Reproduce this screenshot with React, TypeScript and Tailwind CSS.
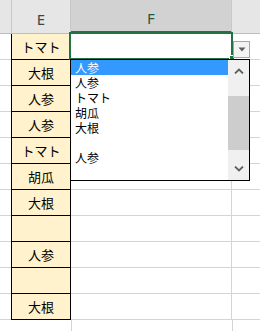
import React from 'react'

const cells = ['トマト', '大根', '人参', '人参', 'トマト', '胡瓜', '大根', '', '人参', '', '大根']
const options = ['人参', '人参', 'トマト', '胡瓜', '大根', '', '人参', '']

const jp = { fontFamily: '"Noto Sans CJK JP", "Noto Sans", sans-serif' }

function Chevron({ up }: { up?: boolean }) {
  return (
    <svg width="10" height="6" viewBox="0 0 10 6">
      <polyline
        points={up ? '1,5.5 5,1.5 9,5.5' : '1,0.5 5,4.5 9,0.5'}
        fill="none"
        stroke="#606060"
        strokeWidth="1.8"
      />
    </svg>
  )
}

export default function App() {
  return (
    <div className="relative w-[260px] h-[331px] overflow-hidden bg-white" style={jp}>
      {/* column headers */}
      <div
        className="flex h-[34px] bg-[#e6e6e6] border-b border-[#bdbdbd] text-[15px]"
        style={{ fontFamily: '"Noto Sans", sans-serif' }}
      >
        <div className="w-[11px]" />
        <div className="w-[60px] border-l border-r border-[#c8c8c8] flex items-center justify-center pt-[5px] text-[#444]">
          E
        </div>
        <div className="w-[161px] bg-[#d2d2d2] border-b-2 border-[#217346] border-r border-r-[#c8c8c8] flex items-center justify-center pt-[5px] text-[#215a3b]">
          F
        </div>
        <div className="flex-1" />
      </div>

      {/* rows */}
      {[...cells, null].map((c, i) => (
        <div key={i} className="flex h-[26px]">
          <div className="w-[11px] border-b border-[#d4d4d4]" />
          {c === null ? (
            <div className="w-[60px] border-b border-r border-[#d4d4d4] ml-px" />
          ) : (
            <div className="w-[60px] bg-[#fff2cc] border-l border-r border-b border-black flex items-center justify-center text-[13px] text-black">
              {c}
            </div>
          )}
          <div className="w-[161px] border-b border-r border-[#d4d4d4]" />
          <div className="flex-1 border-b border-[#d4d4d4]" />
        </div>
      ))}

      {/* active cell */}
      <div className="absolute left-[69px] top-[32px] w-[164px] h-[28px] border-2 border-[#217346]" />
      <div className="absolute left-[229px] top-[55px] w-[6px] h-[6px] bg-[#217346] border border-white" />

      {/* validation dropdown button */}
      <div className="absolute left-[233px] top-[41px] w-[17px] h-[17px] bg-[#f3f3f3] border border-[#a6a6a6] flex items-center justify-center">
        <svg width="8" height="5" viewBox="0 0 8 5">
          <polygon points="0.5,0.5 7.5,0.5 4,4.5" fill="#606060" />
        </svg>
      </div>

      {/* dropdown list */}
      <div className="absolute left-[70px] top-[59px] w-[180px] h-[122px] border border-black bg-white flex">
        <div className="flex-1 flex flex-col text-[12px] text-black">
          {options.map((o, i) => (
            <div
              key={i}
              className={
                i === 0
                  ? 'h-[15px] pl-[4px] flex items-center overflow-hidden bg-[#3399ff] text-white'
                  : 'h-[15px] pl-[4px] flex items-center overflow-hidden'
              }
            >
              <span className="leading-none">{o}</span>
            </div>
          ))}
        </div>
        <div className="w-[21px] bg-[#f0f0f0] flex flex-col">
          <div className="h-[22px] flex items-center justify-center">
            <Chevron up />
          </div>
          <div className="h-[14px]" />
          <div className="h-[54px] bg-[#cdcdcd]" />
          <div className="flex-1" />
          <div className="h-[22px] flex items-center justify-center">
            <Chevron />
          </div>
        </div>
      </div>
    </div>
  )
}
